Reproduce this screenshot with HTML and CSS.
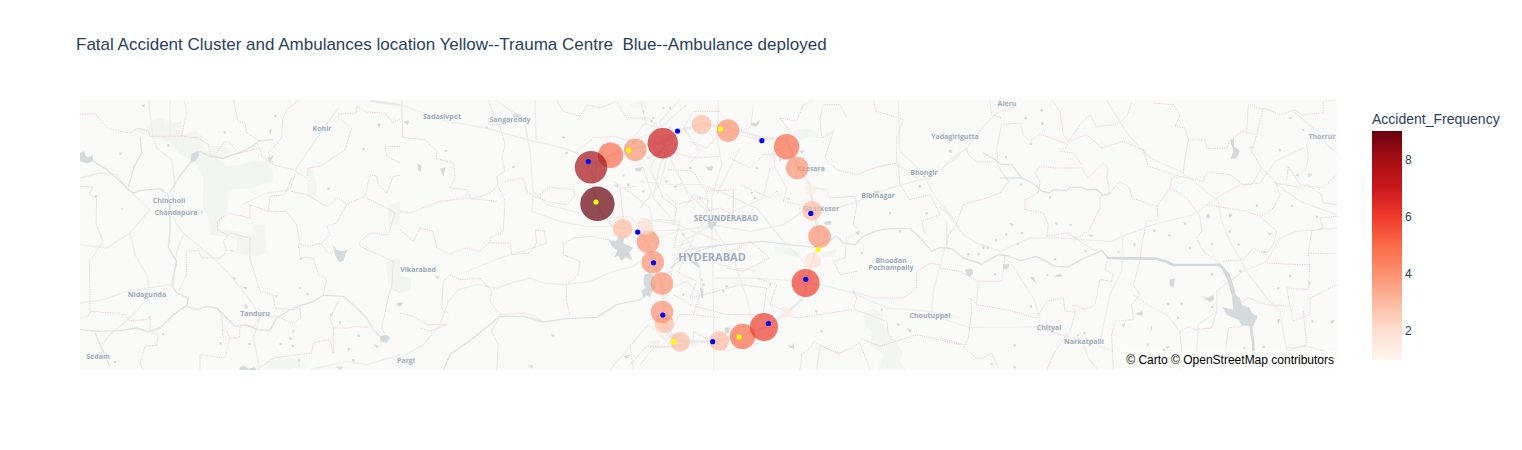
FILE: index.html
```html
<!DOCTYPE html>
<html lang="en">
<head>
<meta charset="utf-8">
<title>Fatal Accident Cluster and Ambulances location</title>
<link rel="stylesheet" href="styles.css">
</head>
<body>
<main class="figure">
<h1 class="title">Fatal Accident Cluster and Ambulances location Yellow--Trauma Centre  Blue--Ambulance deployed</h1>
<div class="plot">
<section class="map">
<svg class="map-canvas" viewBox="80 100 1257 270" role="img" aria-label="Map of accident clusters around Hyderabad">
<rect class="land" x="80" y="100" width="1257" height="270"/>

<!-- west -->
<g transform="translate(80 98) scale(.33333)">
<path class="park" d="M160 95L200 90 225 62 250 60 255 80 305 70 310 110 350 100 372 120 370 150 400 175 440 205 480 200 520 190 570 192 582 245 520 270 445 275 440 345 415 390 465 400 520 412 520 380 555 380 560 465 530 475 470 465 470 420 390 410 388 365 368 330 370 240 345 190 300 170 270 130 215 120ZM390 145L435 145 460 165 420 178 385 180ZM682 210L700 215 712 270 700 305 682 295ZM925 320L960 310 960 385 925 380ZM915 490L960 480 960 580 930 575ZM560 790L640 780 680 805 620 816 550 816Z"/>
<path class="road" d="M205 6L218 110 230 150 275 185 285 260 270 330 285 370 310 405 400 480 450 530 520 620 540 660 520 720 540 816M270 6L270 110M0 240L60 225 110 230 140 270 210 335 150 405 80 450 0 440M150 405L165 470 200 530 210 590 160 650 90 710 60 750M0 615L70 605 140 580 270 560M310 410L290 460 280 560M775 30L700 135 650 210 630 275 560 285 490 318M960 25L875 10M690 816L800 790 860 800 960 770"/>
<path class="river" d="M40 190L80 215 110 240 140 270 160 285 180 278 240 272 265 290 270 350 270 400 265 450 290 490 275 560 290 585 325 600 320 625 350 635 380 625 410 630 465 685 500 680 530 695 570 697 590 660 640 630 700 610 730 592 790 595 830 630 860 660 880 695 905 720M180 118L185 165 160 210 145 268M268 285L295 240 330 195 360 160 390 175 430 182 500 155 540 128 580 125M0 695L60 700 120 698 170 690 205 702 240 690 280 650 320 622M45 705L65 750 90 808M870 8L960 20"/>
<path class="border" d="M0 48L45 48 85 92 150 105 175 90 205 100 210 115 305 115 320 40 312 6M305 115L355 120 385 140 390 170 420 180 540 150 545 175 580 200 640 215 680 240 685 210 720 205 795 155 815 90 775 60 775 48 830 45 830 25 860 42 915 45 940 75 960 62M460 6L475 70 495 75 500 105 540 130M410 165L430 135 445 130 465 155 480 168M660 6L620 35 608 60 605 120 565 165 580 200M0 265L38 267 28 290 50 300 48 380 70 430 50 460 28 490 30 590 30 640 100 645 138 650 145 668 200 665 210 655 210 700 235 712 230 742 195 745 180 795 190 816M0 660L25 655 30 640M295 580L320 530 318 460 355 458 365 480 420 480 440 460 430 430 450 405 510 420 510 480 540 580 580 590 585 630 640 635 660 630 662 660 640 678 590 655 540 655 520 688 480 680 478 720 450 720 435 780 360 770 360 816M510 360L445 345 412 370 412 395 440 410M510 360L510 320 565 340 620 340 650 380 660 440 690 445 720 435 745 465 760 460M565 340L570 295 615 290 635 240M635 280L680 290 740 325 775 300 800 318 855 295 870 230 890 235 895 260 920 285 940 235 960 232M800 320L770 375 740 385 750 410 720 440M860 300L920 330 945 345 925 410 870 405 840 430 840 445 940 490 935 570 960 585M960 145L915 145 920 175 960 195M655 440L660 478 700 480 715 530 740 542 730 590M430 720L425 650 410 630M450 720L440 700 425 695M530 816L580 780 695 765 700 735 750 725 760 765 760 690 800 690 830 685 870 690M760 690L750 660 775 610M930 575L905 690 920 720"/>
<path class="water" d="M0 165L12 160 16 172 24 178 38 172 40 188 22 196 0 190ZM335 168L355 158 358 170 348 188 330 195ZM760 440L770 456 788 460 804 455 796 468 790 488 778 492 764 470ZM563 180L582 170 570 192ZM568 92L576 95 570 112ZM890 78L903 76 898 90ZM900 715L918 711 932 718 918 735 900 728ZM183 20L195 20 192 28ZM117 165L128 162 120 172ZM480 565L502 568 498 574ZM492 618L505 625 498 634ZM480 808L492 802 504 812 525 808 528 816 478 816ZM880 738L898 745 890 750ZM948 618L960 612 960 628ZM765 806L790 806 782 816ZM120 330L132 332 126 336ZM448 457L465 457 456 461Z"/>
<path class="pond" d="M434 103h0M586 54h0M851 153h0M746 272h0M663 483h0M464 541h0M661 570h0M683 588h0M589 595h0M422 736h0M508 738h0M602 738h0M632 722h0M640 700h0M638 744h0M657 788h0M754 650h0M780 673h0M806 754h0M820 787h0M836 713h0M250 708h0M265 142h0M48 295h0M105 792h0M365 342h0"/>
</g>

<!-- centre west -->
<g transform="translate(400 98) scale(.33333)">
<path class="park" d="M0 535L35 540 30 575 0 585ZM690 20L740 10 740 28 700 30ZM745 730L780 725 775 750 750 755Z"/>
<path class="road" d="M0 20L140 70 260 90 380 125 490 150 560 175M285 6L350 50 375 80 390 160 400 290 395 340 480 370 560 385 640 385M405 6L408 125M400 280L440 320 500 335 540 345M0 780L70 740 120 680 145 610 175 575 230 560 290 570 350 550 390 540 430 555 500 560 570 550 640 520 700 505 790 440M200 520L300 480 400 450 440 435 430 390M650 390L740 400 850 395 960 385M640 250L700 290 750 330 760 400 780 520 790 600 800 730 960 730M700 180L730 210 760 300 830 380 960 430M830 100L780 200 760 300M830 100L740 80 720 6M740 70L640 190M800 730L770 700 745 680 630 816M590 200L580 270 600 340 640 390M835 520L880 420 940 330"/>
<path class="ring" d="M575 215L580 270 600 340 640 385 720 400 745 440 775 520 790 600 790 680 810 715 850 730 960 730M575 200L630 172 710 150 800 130 840 98 905 78 960 85"/>
<path class="river" d="M130 816L150 770 220 720 300 655 370 655 430 672 500 662 590 658 650 620 720 605 740 590M790 530L815 520 825 490 860 455 960 440M740 180L770 170 800 140"/>
<path class="border" d="M5 8L8 118 75 125 110 160 110 182 160 195 165 240 150 270 200 275 215 305 270 285 295 260 290 235 315 220 305 180 315 140 300 80 265 80 280 50 265 6M295 265L315 310 310 400 270 420 270 435 330 435 335 470 390 465 410 435 405 395 440 400M290 310L200 300 120 310 30 345 0 340M0 395L40 430 60 390 100 400 110 450 150 468 200 450 240 460 270 430M315 250L370 240 380 280 410 300 445 268 520 275 525 295 500 320 440 310 420 300M240 540L180 545 150 530 130 550 125 630 145 645M240 540L275 580 270 610 300 650 380 645 430 670M490 440L490 470 540 490 535 530 500 560 500 610 510 655M490 440L520 420 580 415 640 430M0 645L40 655 80 680 140 680 90 700 60 690M300 655L275 700 295 740 290 816M470 8L490 40 540 55 560 20 600 30 650 10 680 60 745 60 780 90M530 160L580 120 640 115 700 130 740 110 800 120 860 100M670 360L660 270 710 265M620 360L690 355 710 375 780 365 840 370 830 410 820 450 870 430M810 160L880 180 960 175M805 215L880 220 910 270 960 280M800 290L830 320 900 300 930 340M690 800L740 745 810 745 880 740 880 700 960 740M790 580L860 550 900 590 880 650 960 660M690 740L700 816"/>
<path class="water" d="M618 416L632 428 648 428 656 415 672 420 670 436 684 442 700 450 688 462 692 474 698 488 678 478 664 488 656 474 644 476 652 458 636 446 630 432ZM733 530L752 524 762 534 756 552 768 568 754 584 750 598 738 590 732 602 724 578 736 570 730 552ZM52 198L65 202 62 222 55 215ZM120 212L137 208 130 235ZM10 70L28 68 22 82ZM340 45L365 50 360 60 340 58ZM705 210L728 208 722 220 706 220ZM670 775L692 770 680 784ZM385 802L400 802 395 812ZM450 708L465 710 460 718ZM870 490L885 490 900 512ZM640 265L655 258 655 268ZM105 532L120 538 112 542ZM130 158L145 156 138 162ZM0 612L10 616 0 626ZM484 115L498 117 490 122ZM693 130L704 130 700 137ZM925 207L940 205 935 218Z"/>
<path class="pond" d="M340 207h0M260 88h0M685 260h0M670 232h0M780 485h0M850 590h0M905 545h0M800 250h0M842 260h0M910 560h0M712 400h0M500 165h0M730 280h0M870 210h0M760 60h0M810 30h0"/>
</g>

<!-- centre -->
<g transform="translate(640 98) scale(.33333)">
<path class="park" d="M465 100L500 92 530 100 540 120 500 118 470 130ZM400 445L450 450 485 470 470 480 440 466 410 470ZM670 640L700 632 730 650 724 676 740 690 764 730 790 760 780 790 800 816 715 816 730 770 690 740 698 700 675 685ZM540 465L590 455 585 475 545 480ZM130 735L180 730 180 745 130 750Z"/>
<path class="road" d="M235 6L232 120 245 200 215 300 215 370 220 600 222 816M775 6L780 160 850 225 880 290 930 350 960 390M245 100L365 125 440 125M640 315L750 270 830 248 870 240 960 170M540 345L640 315M0 440L110 400 215 380 330 400 430 380 490 340M60 120L100 200 140 280 200 340M0 250L90 260 190 260 260 290 350 330 430 430 500 500M120 6L60 70 80 180 60 260 0 330M215 380L130 430 100 500 80 600 70 690M215 380L280 480 320 600 340 680 350 740M220 540L330 540 420 545 540 560 640 585 740 630 870 640 960 660M150 440L180 520 185 600M0 360L110 380 150 440 240 500 350 520M300 150L260 230 230 290M875 640L880 580 895 520 915 450M390 210L370 300 280 340 230 370M0 120L60 90 140 20"/>
<path class="ring" d="M70 130L110 100 185 78 290 95 360 118 440 125 470 200 510 260 520 330 535 400 530 455 510 510 490 600 440 645 370 690 300 715 220 730 120 730 85 700 70 640 70 560 35 490 20 430"/>
<path class="river" d="M90 510L110 495 150 470 200 450 260 440 370 430 450 440 520 448 560 430 590 415 610 435 645 440 670 415 705 400 740 392 810 392 830 408 850 430 875 460 900 448 930 452"/>
<path class="border" d="M700 10L710 40 790 65 770 120 770 195 700 210 650 230 590 215 555 180 580 100 545 120 540 60 550 20 600 20 620 60M420 60L470 70 490 20 520 6M420 60L450 100 430 150 400 160 405 210 440 270 430 310M520 270L560 275 570 300 645 295 650 320 640 380 660 400 620 420 615 480 580 490 600 530 650 520M640 580L650 600 640 635 600 640 540 650 470 660 440 650M775 200L830 240 850 225M775 200L780 260 810 305 870 290 900 350 845 370 855 410M640 580L700 600 790 600 830 570 830 520 870 495 900 500M660 720L720 745 830 710 960 740M645 635L740 670 745 710 770 735M530 816L540 745 600 765 660 735 690 816M150 130L200 150 240 110 330 90 340 30M145 200L180 160 130 90 160 40 240 40M200 280L280 275 280 350 240 330 205 340 200 280M140 320L160 290 210 310M270 180L330 210 370 170 400 170M300 260L390 300 410 280 430 310 480 320 480 350M100 180L60 160 30 210 70 300 110 330 100 380M260 470L330 430 390 480 310 520 260 510M110 520L170 550 150 600 230 580 300 560 380 570 370 650 260 650 150 620 100 590M350 540L410 560 390 620 440 640M480 816L485 770 515 745 520 730 560 750 600 770M120 745L40 750 0 800M200 740L260 760 300 745M90 700L120 650 160 650"/>
<path class="water" d="M200 364L214 368 232 366 228 382 220 388 215 397 206 386ZM335 72L346 76 360 66 357 78 348 86 332 82ZM198 205L206 208 215 202 215 218 202 215ZM445 740L456 744 460 734 464 752 450 750ZM255 690L270 688 268 705 255 708ZM180 570L190 572 189 602 182 590ZM550 374L560 370 575 368 572 380 555 380ZM155 490L175 495 182 512ZM480 160L495 155 485 168ZM700 280L718 278 710 290ZM645 402L660 400 655 412ZM800 690L815 696 810 704ZM765 477L775 477 775 487 765 485ZM440 300L452 300 448 306ZM100 265L115 262 108 270ZM845 235L858 233 855 240Z"/>
<path class="pond" d="M10 40h0M35 70h0M70 30h0M90 90h0M335 285h0M345 300h0M260 565h0M250 580h0M390 560h0M350 210h0M180 300h0M130 410h0M420 185h0M665 465h0M545 700h0M530 640h0M725 635h0M775 680h0M860 346h0M750 345h0M930 160h0M840 265h0M780 400h0"/>
</g>

<!-- east -->
<g transform="translate(940 98) scale(.33333)">
<path class="road" d="M0 220L30 185 80 150 130 85 170 45 230 25M0 325L25 350 70 410 110 435 180 460 215 500 280 600 300 660M180 460L270 420 360 420 515 430 560 410 640 380 760 350 830 300 900 260 960 255 1005 190 1090 150M500 6L545 80 560 105 630 180 720 220 780 265 835 310 845 370 870 430 920 520 980 600 1020 640 1030 700 1050 816M0 660L90 688 290 687 360 710 440 730 520 760M548 420L545 520 510 590 490 680 480 740M430 740L445 780 475 816M20 370L20 440M770 760L775 680 830 640 830 580 910 520 980 490 1020 420 1070 400 1191 390M1060 40L1130 100 1160 140 1191 165M1005 255L1080 310 1191 350M1040 750L1100 745 1191 770"/>
<path class="river" d="M20 448L40 455 70 480 125 498 175 470 205 474 240 488 290 475 345 505 385 507 430 482 485 458 505 480M130 165L165 185 180 198 215 200 245 240 180 240M245 240L285 260 305 280 330 285 340 275 380 278 390 268 425 268 445 276 470 275 490 292 510 288"/>
<path class="river wide" d="M500 480L580 481 650 482 675 490 700 501 840 501 865 530 880 575 890 620M932 680L940 740 940 770"/>
<path class="border" d="M20 445L25 410 45 390 70 320 140 300 180 285 205 250 175 205 170 150 185 80 240 75 250 110 270 130 300 108 360 130 385 140 360 160 400 165 425 200M150 6L155 50 185 60M335 6L360 40 370 110 385 130 420 80 450 50 470 85 530 80 560 55 575 15M385 130L440 110 485 150 550 130 610 155 625 205 720 235 790 250 800 222 870 230 910 260 935 260 965 210 935 160 950 110 905 100 870 130 860 150 800 152 795 125 745 125 735 90 705 85 720 50 700 20 640 15M745 125L735 180 730 225M80 150L85 170 110 192 175 192M285 225L300 205 350 210 425 210 445 240 490 195 505 210 500 240 510 285 480 295 480 330 445 400 410 420 380 405 320 415 325 380 310 345 255 335 255 305 295 285 300 250 285 225M380 405L470 460M510 285L540 250 570 270 575 300 650 325 655 365 620 370 605 440 600 490 580 560 600 590 575 620 580 665 525 670 515 710 520 816M650 325L690 270 695 240 730 235M690 270L740 300 780 355 785 400 770 420 790 460 845 500M800 320L920 340 960 355 1010 400 1000 440 975 470 940 450 910 485 850 490M960 355L1000 330 1020 290 1005 250 965 210M1005 255L1090 270 1100 260 1145 290 1150 315 1191 320M950 110L970 30 1020 50 1065 35 1085 50 1150 45 1150 10 1191 6M920 100L925 20 970 35M1040 245L1045 205 1080 260 1150 270 1191 230M1100 140L1105 180 1095 220M500 490L495 515 520 530 515 550 480 545 465 620 435 635 400 620 405 650 390 700 365 730 340 770 320 816M405 640L375 640 370 600 320 610 290 660 200 635 110 620 92 600 95 640 85 720 70 750 110 780 130 780 155 765 175 810M110 620L115 550 185 550 190 520 195 470M0 510L60 520 115 550M0 720L70 740M580 590L640 630 680 650 720 700 725 760 720 816M720 700L750 685 760 695 815 690 830 640M850 816L865 690 920 682M890 620L925 600 980 620 1050 625 1040 570 1105 575 1110 500 1105 465 1115 400 1150 390 1140 360 1191 355M980 495L1080 500 1110 500M1105 465L1191 468M1050 625L1060 670 1110 650 1110 600 1191 560M1090 640L1100 740 1040 760"/>
<path class="water" d="M820 495L845 500 870 540 885 590 900 600 905 620 930 630 935 645 952 655 940 685 905 682 895 665 860 650 848 628 880 635 875 590 862 545 845 512ZM780 592L798 600 820 592 822 605 808 612ZM870 125L882 122 882 145 900 158 890 180 872 182 880 160ZM690 545L705 540 700 570 688 562ZM585 648L608 638 608 655ZM75 515L95 512 100 525 90 538 80 530ZM188 500L208 498 205 512 192 515ZM340 538L360 526 368 535ZM270 538L282 538 288 558ZM635 682L637 690 630 705ZM1105 225L1117 230 1105 238ZM1168 670L1185 665 1178 678ZM1012 665L1020 662 1014 684ZM865 345L878 350 868 362ZM800 350L808 346 810 360 800 360ZM930 145L945 148 932 152ZM675 745L690 745 682 752ZM730 372L740 375 735 382ZM545 680L556 675 550 690ZM208 375L222 378 216 386ZM445 408L462 413 452 417ZM578 438L588 434 585 446ZM962 460L984 460 975 466ZM982 402L997 408 988 412Z"/>
<path class="pond" d="M257 60h0M305 37h0M307 77h0M33 160h0M273 137h0M243 260h0M199 409h0M168 427h0M234 438h0M247 405h0M350 376h0M392 381h0M345 484h0M437 460h0M165 529h0M85 469h0M115 468h0M130 449h0M143 449h0M322 531h0M273 626h0M224 742h0M155 798h0M224 808h0M414 712h0M433 705h0M643 398h0M688 412h0M750 450h0M684 618h0M725 617h0M714 660h0M817 627h0M623 740h0M672 756h0M913 750h0M971 747h0M1050 534h0M1015 571h0M1109 556h0M902 520h0M896 440h0M816 438h0M869 400h0M951 323h0M1056 324h0M1131 357h0M1072 231h0M1020 157h0M1090 96h0M1052 60h0M1117 670h0M816 529h0M198 177h0M330 298h0M536 462h0"/>
</g>

<g class="place">
<text x="169" y="203">Chincholi</text><text x="176" y="215">Chandapura</text><text x="322" y="131">Kohir</text>
<text x="147" y="297">Nidagunda</text><text x="255" y="316">Tanduru</text><text x="98" y="359">Sedam</text>
<text x="442" y="119">Sadasivpet</text><text x="510" y="122">Sangareddy</text><text x="418" y="272">Vikarabad</text><text x="406" y="363">Pargi</text>
<text x="811" y="171">Keesara</text><text x="821" y="211">Ghatkeser</text><text x="878" y="198">Bibinagar</text><text x="924" y="175">Bhongir</text>
<text x="955" y="139">Yadagirigutta</text><text x="1007" y="106">Aleru</text><text x="891" y="263">Bhoodan</text><text x="891" y="270">Pochampally</text>
<text x="930" y="318">Choutuppal</text><text x="1049" y="330">Chityal</text><text x="1084" y="344">Narkatpalli</text><text x="1322" y="139">Thorrur</text>
<text class="town" x="726" y="221">SECUNDERABAD</text><text class="city" x="712" y="261">HYDERABAD</text>
</g>

<g class="clusters">
<circle class="f5" cx="610.5" cy="155.3" r="12.7"/><circle class="f8" cx="591" cy="167.3" r="16.2"/><circle class="f9" cx="597.4" cy="203.8" r="17.2"/>
<circle class="f4" cx="635.3" cy="149.8" r="11.3"/><circle class="f7" cx="662.8" cy="143.2" r="15.2"/><circle class="f3" cx="701.6" cy="124.5" r="9.8"/>
<circle class="f4" cx="728" cy="130.6" r="11.3"/><circle class="f5" cx="786.6" cy="146.7" r="12.7"/><circle class="f4" cx="797.2" cy="168" r="11.3"/>
<circle class="f1" cx="810.5" cy="189.8" r="5.7"/><circle class="f3" cx="811.9" cy="210.6" r="9.8"/><circle class="f4" cx="819.6" cy="236.6" r="11.3"/>
<circle class="f2" cx="813" cy="260.3" r="8"/><circle class="f6" cx="805.6" cy="283" r="14"/><circle class="f1" cx="786" cy="312.7" r="5.7"/>
<circle class="f5" cx="742.6" cy="336.4" r="12.7"/><circle class="f6" cx="764" cy="327" r="14"/><circle class="f3" cx="719.5" cy="341" r="9.8"/>
<circle class="f3" cx="680.1" cy="341.8" r="9.8"/><circle class="f3" cx="664.2" cy="323.2" r="9.8"/><circle class="f4" cx="662" cy="312" r="11.3"/>
<circle class="f4" cx="661.9" cy="283.6" r="11.3"/><circle class="f4" cx="652.8" cy="262.3" r="11.3"/><circle class="f4" cx="648" cy="241.8" r="11.3"/>
<circle class="f2" cx="645" cy="226.8" r="8"/><circle class="f3" cx="622.7" cy="228.7" r="9.8"/>
</g>
<g class="trauma">
<circle cx="596" cy="202" r="2.6"/><circle cx="628.7" cy="150.4" r="2.6"/><circle cx="720.3" cy="129" r="2.6"/><circle cx="818.1" cy="249.6" r="2.6"/><circle cx="739.1" cy="337.1" r="2.6"/><circle cx="673.5" cy="341.7" r="2.6"/>
</g>
<g class="ambulance">
<circle cx="588.3" cy="161.6" r="2.6"/><circle cx="677.5" cy="131" r="2.6"/><circle cx="761.9" cy="140.7" r="2.6"/><circle cx="810.8" cy="213.4" r="2.6"/><circle cx="805.7" cy="279.3" r="2.6"/><circle cx="768.4" cy="323.5" r="2.6"/><circle cx="712.7" cy="341.7" r="2.6"/><circle cx="662.8" cy="315.1" r="2.6"/><circle cx="653.5" cy="262.8" r="2.6"/><circle cx="637.7" cy="232.1" r="2.6"/>
</g>
</svg>
<p class="attribution"><a href="#carto">© Carto</a> <a href="#osm">© OpenStreetMap contributors</a></p>
</section>
<aside class="legend">
<h2 class="legend-title">Accident_Frequency</h2>
<div class="scale">
<div class="bar"></div>
<div class="ticks"><span>8</span><span>6</span><span>4</span><span>2</span></div>
</div>
</aside>
</div>
</main>
</body>
</html>
```
FILE: styles.css
```css
body {
  margin: 0;
  background: #fff;
  color: #2a3f5f;
  font-family: "Liberation Sans", Arial, sans-serif;
}

.title {
  margin: 0;
  padding: 35px 76px 45px;
  font-size: 17px;
  line-height: 20px;
  font-weight: 400;
  white-space: pre;
}

.plot {
  display: grid;
  grid-template-columns: 1fr 128px;
  gap: 35px;
  align-items: start;
  padding: 0 22px 0 80px;
}

.map {
  position: relative;
}

.map-canvas {
  display: block;
  width: 100%;
  height: auto;
}

.land { fill: #fafaf8; }
.park { fill: #f2f5f2; }
.water { fill: #d4dadc; }

.road,
.ring,
.river,
.border,
.pond {
  fill: none;
  stroke-linejoin: round;
}

.road { stroke: #eeeeed; stroke-width: 4; }
.ring { stroke: #ececeb; stroke-width: 8; }
.river { stroke: #dde3e6; stroke-width: 4; }
.river.wide { stroke: #d4dadc; stroke-width: 8; }
.border { stroke: #edcfd4; stroke-width: 3; stroke-dasharray: 4 3; }
.pond { stroke: #d8dee0; stroke-width: 8; stroke-linecap: round; }

.place {
  fill: #9dabbc;
  stroke: #fafaf8;
  stroke-width: 1px;
  paint-order: stroke;
  font-family: "Open Sans", "Noto Sans", sans-serif;
  font-size: 7px;
  font-weight: 700;
  text-anchor: middle;
}

.town { font-size: 8px; }
.city { font-size: 11px; }

.clusters { fill-opacity: .7; }
.f1 { fill: #ffede6; }
.f2 { fill: #fee0d2; }
.f3 { fill: #fcbba1; }
.f4 { fill: #fc9272; }
.f5 { fill: #fb6a4a; }
.f6 { fill: #ef3b2c; }
.f7 { fill: #cb181d; }
.f8 { fill: #a50f15; }
.f9 { fill: #67000d; }

.trauma { fill: #ff0; }
.ambulance { fill: #00f; }

.attribution {
  position: absolute;
  right: 0;
  bottom: 0;
  margin: 0;
  padding: 2px 3px;
  background: rgba(255, 255, 255, .5);
  font-size: 12px;
  line-height: 15px;
}

.attribution a {
  color: #000;
  text-decoration: none;
}

.legend-title {
  margin: 0;
  padding: 11px 0 4px;
  font-size: 14px;
  line-height: 16px;
  font-weight: 400;
}

.scale {
  display: flex;
  gap: 3px;
  height: 229px;
}

.bar {
  width: 30px;
  background: linear-gradient(#67000d, #a50f15, #cb181d, #ef3b2c, #fb6a4a, #fc9272, #fcbba1, #fee0d2, #fff5f0);
}

.ticks {
  display: flex;
  flex-direction: column;
  font-size: 12px;
}

.ticks span {
  flex: 1;
  display: flex;
  align-items: center;
}
```
